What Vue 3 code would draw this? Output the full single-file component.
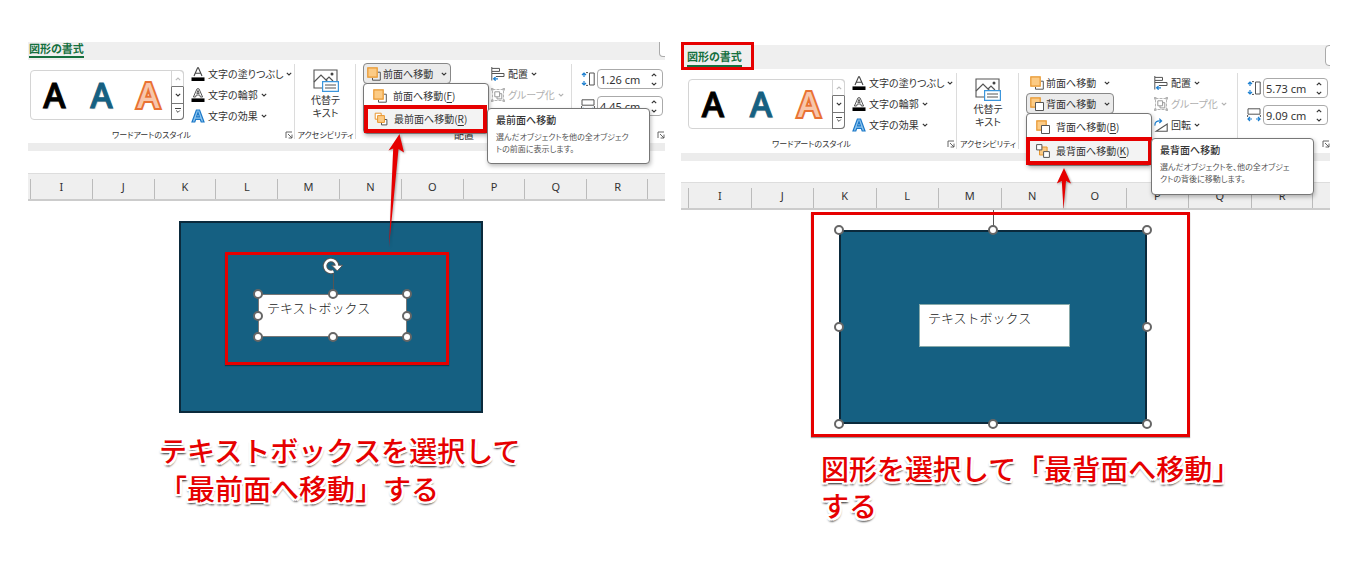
<script setup>
const handles = [
  [0, 0], [50, 0], [100, 0],
  [0, 50], [100, 50],
  [0, 100], [50, 100], [100, 100],
]
const columns = ['I', 'J', 'K', 'L', 'M', 'N', 'O', 'P', 'Q', 'R']
const textTools = [
  { icon: 'i-fill', label: '文字の塗りつぶし' },
  { icon: 'i-outline', label: '文字の輪郭' },
  { icon: 'i-effect', label: '文字の効果' },
]

const panels = [
  {
    id: 'front',
    order: [{ icon: 'i-front', label: '前面へ移動', open: true }],
    menu: [
      { icon: 'i-front', label: '前面へ移動', key: 'F' },
      { icon: 'i-tofront', label: '最前面へ移動', key: 'R' },
    ],
    tip: { title: '最前面へ移動', lines: ['選んだオブジェクトを他の全オブジェク', 'トの前面に表示します。'] },
    align: [
      { icon: 'i-align', label: '配置' },
      { icon: 'i-group', label: 'グループ化', disabled: true },
    ],
    footer: '配置',
    height: '1.26 cm',
    width: '4.45 cm',
    caption: ['テキストボックスを選択して', '「最前面へ移動」する'],
  },
  {
    id: 'back',
    order: [
      { icon: 'i-front', label: '前面へ移動' },
      { icon: 'i-back', label: '背面へ移動', open: true },
    ],
    menu: [
      { icon: 'i-back', label: '背面へ移動', key: 'B' },
      { icon: 'i-toback', label: '最背面へ移動', key: 'K' },
    ],
    tip: { title: '最背面へ移動', lines: ['選んだオブジェクトを、他の全オブジェ', 'クトの背後に移動します。'] },
    align: [
      { icon: 'i-align', label: '配置' },
      { icon: 'i-group', label: 'グループ化', disabled: true },
      { icon: 'i-rotate', label: '回転' },
    ],
    footer: '',
    height: '5.73 cm',
    width: '9.09 cm',
    caption: ['図形を選択して「最背面へ移動」', 'する'],
  },
]
</script>

<template>
  <svg class="defs" width="0" height="0" aria-hidden="true">
    <symbol id="i-chev" viewBox="0 0 6 6"><path d="M.8 1.8 3 4 5.2 1.8" fill="none" stroke="currentColor" stroke-width="1.1" /></symbol>
    <symbol id="i-fill" viewBox="0 0 14 14">
      <path d="M3 9 6.6.8h.8L11 9M4.3 6.2h5.4" fill="none" stroke="#444" stroke-width="1.1" />
      <path d="M.5 10.4h13V14H.5z" fill="#000" />
    </symbol>
    <symbol id="i-outline" viewBox="0 0 14 14">
      <path d="M2.4 9 6 .8h2L11.6 9H9.4L8.7 7H5.3L4.6 9zM5.8 5.4h2.4L7 2.4z" fill="#fff" stroke="#444" stroke-width=".9" />
      <path d="M.5 10.4h13V14H.5z" fill="#000" />
    </symbol>
    <symbol id="i-effect" viewBox="0 0 14 14">
      <path d="M1 13 5.4 1h3.2L13 13h-2.8L9.3 10.3H4.7L3.8 13zM5.6 7.8h2.8L7 3.7z" fill="#8cc4ee" stroke="#1b78c8" stroke-width="1.2" />
    </symbol>
    <symbol id="i-front" viewBox="0 0 14 14">
      <path d="M11 5.2h2.3v8H5.5V11" fill="none" stroke="#555" />
      <path d="M.8.8h9.4v9.4H.8z" fill="#fccb85" stroke="#e8962e" stroke-width="1.2" />
    </symbol>
    <symbol id="i-back" viewBox="0 0 14 14">
      <path d="M.8.8h9.4v9.4H.8z" fill="#fccb85" stroke="#e8962e" stroke-width="1.2" />
      <path d="M5.5 5.5h8v8h-8z" fill="#fff" stroke="#555" />
    </symbol>
    <symbol id="i-tofront" viewBox="0 0 14 14">
      <path d="M1.2 1.2h6v6h-6z" fill="#fff" stroke="#e8962e" />
      <path d="M7.5 7.5h5.4v5.4H7.5z" fill="#fff" stroke="#555" />
      <path d="M3.6 3.6h6.8v6.8H3.6z" fill="#fccb85" stroke="#e8962e" />
    </symbol>
    <symbol id="i-toback" viewBox="0 0 14 14">
      <path d="M3.5 3h7.6v8H3.5z" fill="#fccb85" stroke="#e8962e" />
      <path d="M.6.6h5.3v5.3H.6zM7.6 7.6h5.8v5.8H7.6z" fill="#fff" stroke="#555" />
    </symbol>
    <symbol id="i-align" viewBox="0 0 14 14">
      <path d="M.8 0v13.5M1 1.4h7.5v3H1M1 6.5h12v3H5" fill="none" stroke="#555" />
      <path d="M7 11.8H2.8M4.6 9.9l-2 1.9 2 1.9" fill="none" stroke="#1c7fd0" stroke-width="1.2" />
    </symbol>
    <symbol id="i-group" viewBox="0 0 14 14">
      <path d="M1.5 1.5h11v11h-11z" fill="none" stroke="#b5b5b5" stroke-dasharray="3 1" />
      <path d="M0 0h2.4v2.4H0zM11.6 0H14v2.4h-2.4zM0 11.6h2.4V14H0zM11.6 11.6H14V14h-2.4z" fill="#b5b5b5" />
      <path d="M3.8 3.8h4.8v5H3.8zM8.8 5.7h2v5.2H6V9" fill="none" stroke="#999" />
    </symbol>
    <symbol id="i-rotate" viewBox="0 0 14 14">
      <path d="M13.2 6v7.2H2.2z" fill="#fff" stroke="#555" stroke-width="1.1" />
      <path d="M.9 7.6C.6 4 3 2.3 7 2.9M5.3.6l2.3 2.3L5.3 5" fill="none" stroke="#1c7fd0" stroke-width="1.2" />
    </symbol>
    <symbol id="i-alt" viewBox="0 0 26 24">
      <path d="M1 1h23v18H1z" fill="#fff" stroke="#555" stroke-width="1.1" />
      <path d="M1 13 8 6l8 8M13 11l3-3 4 4" fill="none" stroke="#555" stroke-width="1.2" />
      <circle cx="19" cy="5" r="1.5" fill="#444" />
      <path d="M9.6 12.6h15.8v9.8H9.6z" fill="#fff" stroke="#3c96dc" stroke-width="1.2" />
      <path d="M12 16h11M12 19h11" stroke="#555" />
    </symbol>
    <symbol id="i-launch" viewBox="0 0 8 8"><path d="M1 7V1h6M3 3l4 4M7 3.6V7H3.6" fill="none" stroke="#555" stroke-width=".9" /></symbol>
    <symbol id="i-height" viewBox="0 0 14 14">
      <path d="M3 1v4M3 9v4M1 3l2-2 2 2M1 11l2 2 2-2" fill="none" stroke="#1c7fd0" stroke-width="1.2" />
      <path d="M8.5 1h4.7v12H8.5zM5 .6h2M5 13.4h2" fill="none" stroke="#555" />
    </symbol>
    <symbol id="i-width" viewBox="0 0 14 14">
      <path d="M1 .8h12v5.4H1zM.6 7v2M13.4 7v2" fill="none" stroke="#555" />
      <path d="M1 11h4M9 11h4M3 9l-2 2 2 2M11 9l2 2-2 2" fill="none" stroke="#1c7fd0" stroke-width="1.2" />
    </symbol>
  </svg>

  <main class="page">
    <section v-for="p in panels" :key="p.id" class="panel" :class="p.id">
      <nav class="tabs">
        <div class="tab-frame"><a href="#" class="tab">図形の書式</a></div>
        <div class="corner"><button type="button" class="corner-btn" aria-label="コメント"></button></div>
      </nav>

      <div class="ribbon">
        <div class="group wordart">
          <div class="tools">
            <div class="gallery">
              <button type="button" class="sample black">A</button>
              <button type="button" class="sample blue">A</button>
              <button type="button" class="sample orange">A</button>
              <div class="scroller">
                <button type="button" class="dim" aria-label="上へ"><svg class="chev flip"><use href="#i-chev" /></svg></button>
                <button type="button" aria-label="下へ"><svg class="chev"><use href="#i-chev" /></svg></button>
                <button type="button" class="more" aria-label="その他"><svg class="chev"><use href="#i-chev" /></svg></button>
              </div>
            </div>
            <div class="stack">
              <button v-for="t in textTools" :key="t.label" type="button" class="tool">
                <svg class="icon"><use :href="'#' + t.icon" /></svg><span>{{ t.label }}</span><svg class="chev"><use href="#i-chev" /></svg>
              </button>
            </div>
          </div>
          <footer><span>ワードアートのスタイル</span><svg class="launch"><use href="#i-launch" /></svg></footer>
        </div>

        <div class="group access">
          <div class="tools">
            <button type="button" class="big"><svg><use href="#i-alt" /></svg><span>代替テ</span><span>キスト</span></button>
          </div>
          <footer><span>アクセシビリティ</span></footer>
        </div>

        <div class="group arrange">
          <div class="tools">
            <div class="stack order">
              <div v-for="o in p.order" :key="o.label" class="drop">
                <button type="button" class="tool" :class="{ open: o.open }">
                  <svg class="icon"><use :href="'#' + o.icon" /></svg><span>{{ o.label }}</span><svg class="chev"><use href="#i-chev" /></svg>
                </button>
                <div v-if="o.open" class="menu">
                  <button v-for="m in p.menu" :key="m.key" type="button" class="item">
                    <svg class="icon"><use :href="'#' + m.icon" /></svg><span>{{ m.label }}(<u>{{ m.key }}</u>)</span>
                  </button>
                  <div class="tip" role="tooltip">
                    <strong>{{ p.tip.title }}</strong>
                    <p><template v-for="l in p.tip.lines" :key="l">{{ l }}<br /></template></p>
                  </div>
                </div>
              </div>
            </div>
            <div class="stack">
              <button v-for="a in p.align" :key="a.label" type="button" class="tool" :disabled="a.disabled">
                <svg class="icon"><use :href="'#' + a.icon" /></svg><span>{{ a.label }}</span><svg class="chev"><use href="#i-chev" /></svg>
              </button>
            </div>
          </div>
          <footer><span>{{ p.footer }}</span></footer>
        </div>

        <div class="group size">
          <div class="fields">
            <div class="field">
              <label :for="p.id + '-h'" aria-label="高さ"><svg class="icon"><use href="#i-height" /></svg></label>
              <div class="spin">
                <input :id="p.id + '-h'" type="text" :value="p.height" />
                <span class="steps"><svg class="chev flip"><use href="#i-chev" /></svg><svg class="chev"><use href="#i-chev" /></svg></span>
              </div>
            </div>
            <div class="field">
              <label :for="p.id + '-w'" aria-label="幅"><svg class="icon"><use href="#i-width" /></svg></label>
              <div class="spin">
                <input :id="p.id + '-w'" type="text" :value="p.width" />
                <span class="steps"><svg class="chev flip"><use href="#i-chev" /></svg><svg class="chev"><use href="#i-chev" /></svg></span>
              </div>
            </div>
          </div>
          <footer><span></span><svg class="launch"><use href="#i-launch" /></svg></footer>
        </div>
      </div>

      <div class="strip"></div>
      <div class="heads">
        <div v-for="c in columns" :key="c" class="head">{{ c }}</div>
      </div>

      <div class="canvas">
        <div class="shape">
          <template v-if="p.id === 'back'">
            <i class="stem"></i>
            <i v-for="h in handles" :key="h.join()" class="handle" :style="{ left: h[0] + '%', top: h[1] + '%' }"></i>
          </template>
        </div>
        <div class="box">
          <textarea aria-label="テキストボックス" rows="1">テキストボックス</textarea>
          <template v-if="p.id === 'front'">
            <i class="stem"></i>
            <svg class="turn" viewBox="0 0 22 18">
              <path d="M11.5 14.4A6 6 0 1 1 15 9" fill="none" stroke="#555" stroke-width="4.6" />
              <path d="M9.6 8.2h11.2L15.3 14z" fill="#fff" stroke="#555" />
              <path d="M11.5 14.4A6 6 0 1 1 15 9" fill="none" stroke="#fff" stroke-width="2.6" />
            </svg>
            <i v-for="h in handles" :key="h.join()" class="handle" :style="{ left: h[0] + '%', top: h[1] + '%' }"></i>
          </template>
        </div>
        <div class="frame"></div>
        <svg v-if="p.id === 'front'" class="arrow" viewBox="0 0 20 114"><path d="M4 113 8.200 14.500 3.500 16.500 14.500 0 19 18.500 13.500 15z" /></svg>
        <svg v-else class="arrow" viewBox="0 0 16 42"><path d="M7.500 41 5.800 13 .8 15.500 8 0 15 15.500 10 13z" /></svg>
      </div>
      <p class="caption"><template v-for="l in p.caption" :key="l">{{ l }}<br /></template></p>
    </section>
  </main>
</template>

<style>
body { background: #fff; }
</style>

<style scoped>
* { box-sizing: border-box; }
.defs { position: absolute; }
.page {
  display: grid;
  grid-template-columns: 637fr 649fr;
  gap: 16px;
  align-items: start;
  padding: 42px 30px 0 28px;
  font: 10px/14px "Noto Sans CJK JP", sans-serif;
  font-feature-settings: "palt";
  color: #333;
}
.panel { --inset: 2px; min-width: 0; }
.panel.back { --inset: 7px; padding-top: 3px; }
button {
  font: inherit; font-feature-settings: inherit; color: inherit;
  background: none; border: 0; padding: 0; margin: 0; white-space: nowrap;
}
.icon { width: 14px; height: 14px; flex: none; }
.chev { width: 6px; height: 6px; flex: none; color: #333; }
.flip { transform: rotate(180deg); }

.tabs { display: flex; justify-content: space-between; height: 18px; background: #efefef; }
.back .tabs { height: 24px; }
.tab-frame { padding-left: 1px; }
.tab {
  display: block; height: 16px; line-height: 12px;
  font-size: 11px; font-weight: 700; color: #15703f; text-decoration: none;
  border-bottom: 2px solid #15703f;
}
.back .tab-frame {
  height: 28px; margin-top: -3px; padding: 3px 9px 0 3px;
  border: 3px solid #e60000;
}
.back .tab { height: 19px; line-height: 16px; }
.corner { width: 6px; overflow: hidden; }
.corner-btn { width: 24px; height: 15px; background: #fff; border: 1px solid #aaa; border-top: 0; border-radius: 0 0 4px 4px; }
.back .corner { width: 5px; }
.back .corner-btn { height: 21px; border-top: 1px solid #aaa; border-radius: 4px; }

.ribbon { display: grid; grid-template-columns: 267fr 61fr 216fr 93fr; height: 83px; background: #fff; }
.back .ribbon { grid-template-columns: 276fr 62fr 219fr 92fr; height: 84px; }
.group { display: flex; flex-direction: column; position: relative; min-width: 0; padding-top: 3px; }
.group:not(:last-child)::after {
  content: ""; position: absolute; right: 0; top: 4px; bottom: 4px; width: 1px; background: #dcdcdc;
}
.tools { display: flex; height: 65px; }
.wordart { padding-left: var(--inset); }
footer { display: flex; align-items: center; height: 14px; font-size: 8px; white-space: nowrap; }
.arrange footer { font-size: 10px; }
footer span { flex: 1; text-align: center; }
.wordart footer { padding: 0 2px 0 0; }
.wordart footer span { padding-right: 12px; }
.launch { width: 8px; height: 8px; }
.gallery {
  display: flex; width: 154px; height: 50px; margin-top: 7px;
  border: 1px solid #d4d4d4; border-radius: 4px;
}
.back .gallery { width: 157px; }
.sample { flex: 1; font: 500 34px/48px "Noto Sans", sans-serif; -webkit-text-stroke: 1px currentColor; text-shadow: 1px 1px 1px #bbb; }
.sample.black { color: #000; }
.sample.blue { color: #156082; }
.sample.orange { color: #f7c6ab; -webkit-text-stroke: 4px #e97132; paint-order: stroke; text-shadow: none; }
.scroller { display: flex; flex-direction: column; width: 13px; margin: -1px; }
.scroller button { display: flex; align-items: center; justify-content: center; flex: 1; border: 1px solid #777; }
.scroller button + button { border-top-width: 0; }
.scroller .dim { border-color: #d4d4d4 #d4d4d4 #777; border-radius: 0 4px 0 0; }
.scroller .dim .chev { color: #bbb; }
.scroller .more { border-radius: 0 0 4px 0; }
.more .chev { border-top: 1px solid #444; }
.stack { display: flex; flex-direction: column; align-items: flex-start; }
.tool { display: flex; align-items: center; height: 21px; gap: 3px; }
.tool:disabled, .tool:disabled .chev { color: #b0b0b0; }
.wordart .stack { margin-left: 7px; }

.access { align-items: center; }
.big { display: flex; flex-direction: column; align-items: center; padding-top: 6px; line-height: 13px; }
.big svg { width: 26px; height: 24px; }

.arrange .tools { padding-left: 7px; }
.order { width: 128px; }
.drop { position: relative; }
.order .tool { width: 88px; height: 21px; padding: 0 4px; gap: 2px; border-radius: 4px; }
.order .chev { margin-left: auto; }
.order .tool.open { background: #ebebeb; border: 1px solid #888; padding: 0 3px; }
.menu {
  position: absolute; z-index: 2; top: 20px; left: 0; width: 126px;
  background: #fff; border: 1px solid #777; border-radius: 4px; box-shadow: 1px 2px 4px #0004;
}
.item { display: flex; align-items: center; gap: 6px; width: 100%; height: 21px; padding-left: 9px; padding-top: 2px; }
.item + .item { width: 123px; height: 28px; padding: 0 0 0 6px; border: 4px solid #e60000; background: #f3f3f3; }
.back .item { height: 23px; }
.back .item + .item { width: 126px; height: 28px; margin-left: -1px; }
.item u { text-underline-offset: 2px; }
.tip {
  position: absolute; left: 123px; top: 24px; width: 163px; height: 56px; padding: 4px 8px;
  background: #fff; border: 1px solid #777; border-radius: 4px; box-shadow: 1px 2px 4px #0004;
  line-height: 12px; color: #555; white-space: nowrap;
}
.back .tip { left: 124px; height: 57px; }
.tip strong { display: block; line-height: 14px; font-size: 10px; font-weight: 500; color: #333; }
.tip p { margin: 4px 0 0; font-size: 8px; }

.size { padding-left: 9px; }
.fields { display: flex; flex-direction: column; gap: 7px; height: 65px; padding-top: 6px; }
.field { display: flex; align-items: center; gap: 2px; }
.field label { display: flex; }
.spin { display: flex; flex: 1; height: 20px; margin-right: 2px; border: 1px solid #aaa; border-radius: 4px; background: #fff; min-width: 0; }
.spin input { flex: 1; min-width: 0; width: 20px; border: 0; padding: 0 0 0 2px; background: none; font: 11px "Noto Sans", sans-serif; color: #333; outline: 0; }
.steps { display: flex; flex-direction: column; justify-content: space-around; width: 11px; }

.strip { height: 30px; background: #fff; border-top: 8px solid #ececec; }
.back .strip { height: 29px; }
.heads {
  display: flex; height: 28px; padding: 0 17px 0 var(--inset);
  background: #efefef; border-top: 1px solid #ddd; border-bottom: 2px solid #ccc;
  font: 11px/25px "Noto Sans", sans-serif; text-align: center;
}
.head { flex: 1; padding-left: 1px; background: linear-gradient(#bbb, #bbb) 0 100% / 1px 20px no-repeat; }
.head:last-child { background: linear-gradient(#bbb, #bbb) 0 100% / 1px 20px no-repeat, linear-gradient(#bbb, #bbb) 100% 100% / 1px 20px no-repeat; }

.canvas { position: relative; height: 230px; }
.back .canvas { height: 240px; }
.shape, .box, .frame, .arrow, .handle, .stem, .turn { position: absolute; }
.shape { left: 151px; top: 20px; width: 304px; height: 192px; background: #156082; box-shadow: inset 0 0 0 2px #0b2a3c; }
.back .shape { left: 158px; top: 20px; width: 308px; height: 194px; }
.box { left: 230px; top: 93px; width: 149px; height: 43px; background: #fff; box-shadow: inset 0 0 0 1px #777; }
.back .box { left: 238px; top: 94px; width: 151px; height: 43px; box-shadow: inset 0 0 0 1px #8aa; }
.box textarea {
  display: block; width: 100%; height: 100%; padding: 5px 9px; border: 0; resize: none; overflow: hidden;
  background: none; outline: 0; font: 300 13px/18px "Noto Sans CJK JP", sans-serif; color: #222;
}
.frame { left: 197px; top: 51px; width: 224px; height: 113px; border: 3px solid #e60000; box-shadow: 0 1px 1px #0006; }
.back .frame { left: 130px; top: 2px; width: 379px; height: 225px; }
.handle { width: 10px; height: 10px; margin: -5px 0 0 -5px; border: 2px solid #666; border-radius: 50%; background: #fff; }
.stem { left: 50%; top: -20px; width: 1px; height: 20px; background: #555; }
.turn { left: 64px; top: -37px; width: 22px; height: 18px; }
.arrow { z-index: 3; fill: #e60000; filter: drop-shadow(1px 1px 1px #0005); }
.front .arrow { left: 357px; top: -67px; width: 20px; height: 114px; }
.back .arrow { left: 375px; top: -42px; width: 16px; height: 42px; }

.caption {
  margin: 0 0 0 131px; font-size: 28px; line-height: 38px; font-weight: 500; color: #e60000;
  font-feature-settings: normal; white-space: nowrap;
  text-shadow: 2px 0 #fff, -2px 0 #fff, 0 2px #fff, 0 -2px #fff, 2px 2px #fff, -2px 2px #fff, 2px -2px #fff, -2px -2px #fff, 1px 3px 2px #444, -1px 3px 2px #888;
}
.back .caption { margin-left: 140px; line-height: 37px; }
</style>
